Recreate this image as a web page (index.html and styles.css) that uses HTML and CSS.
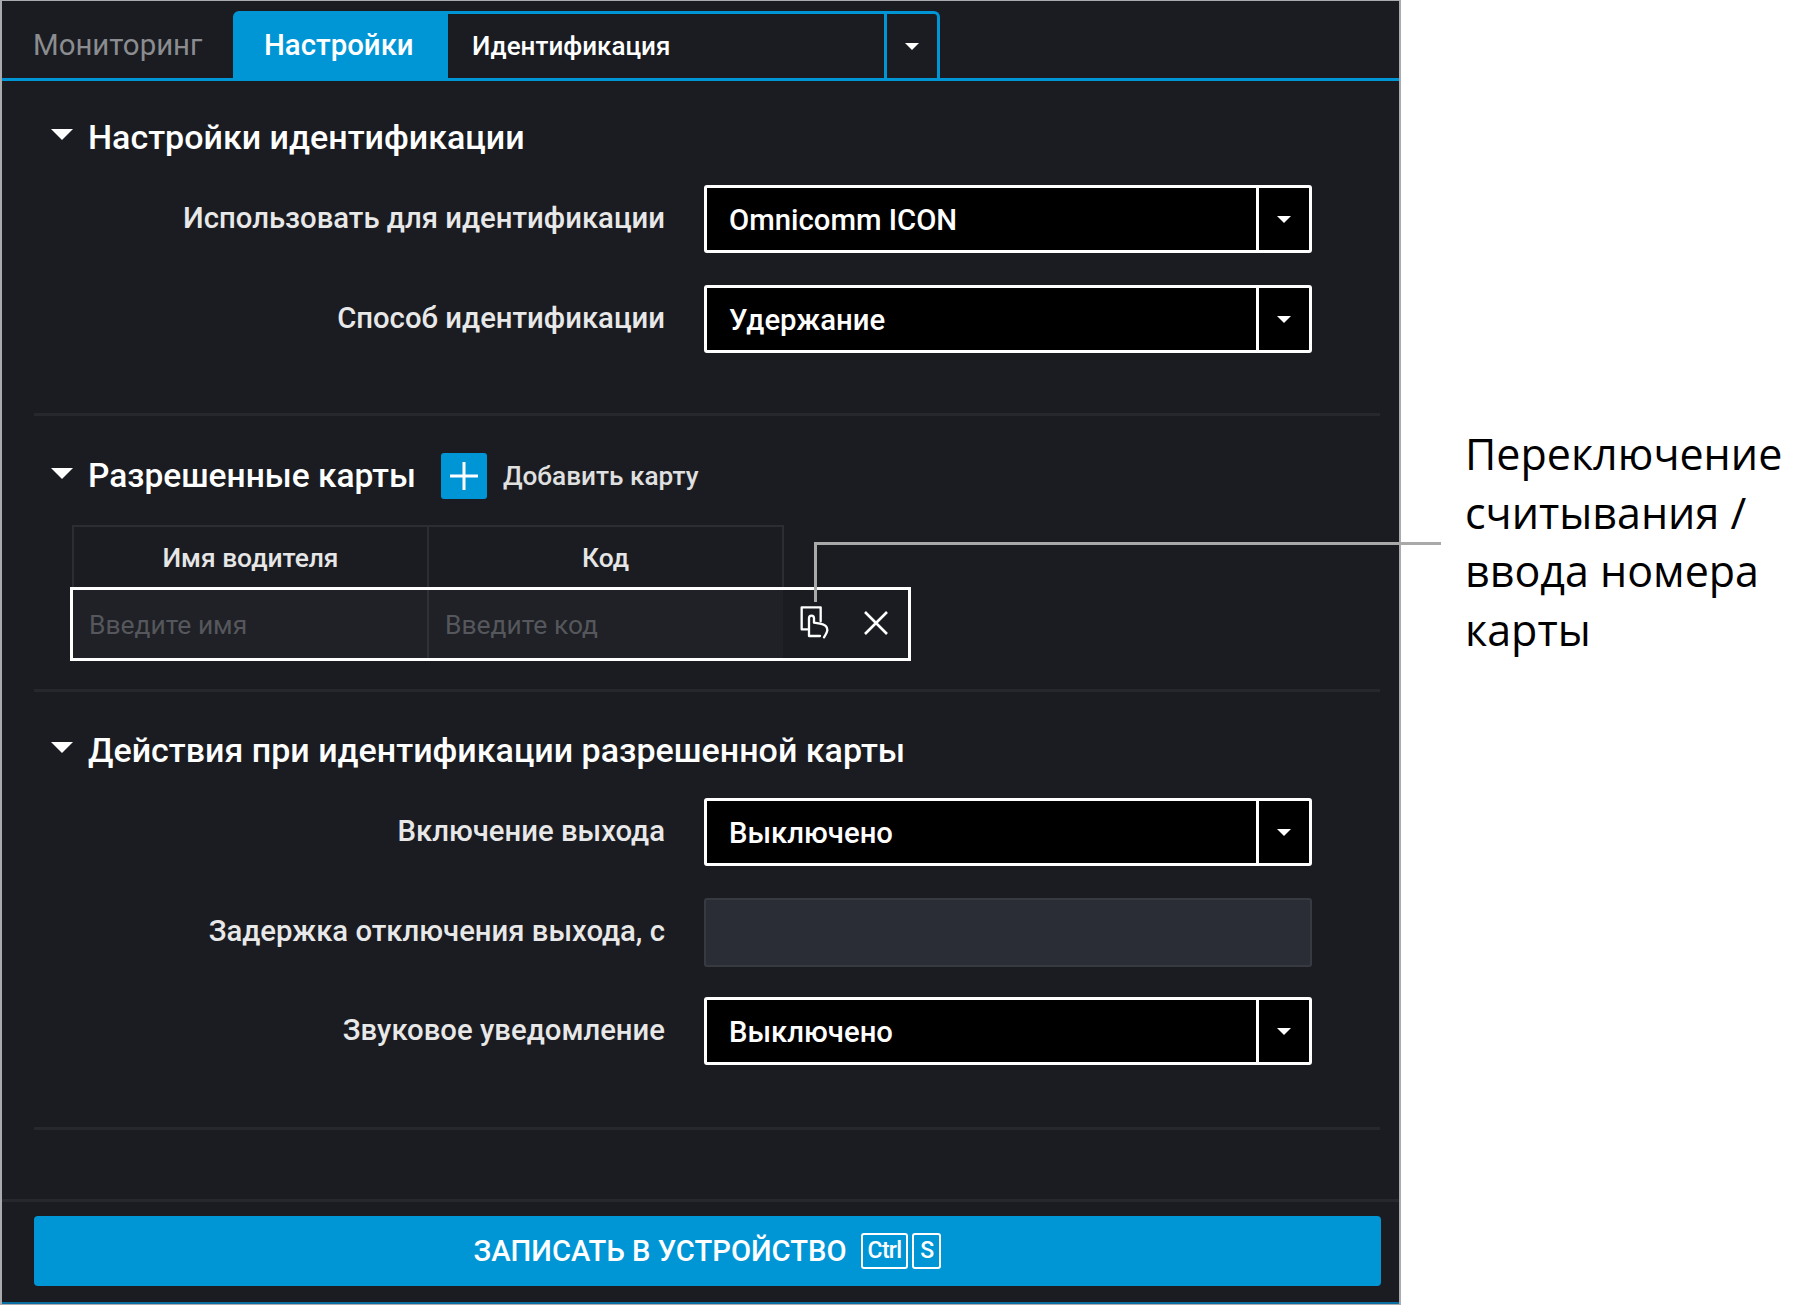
FILE: index.html
```html
<!DOCTYPE html>
<html lang="ru">
<head>
<meta charset="utf-8">
<title>Настройки идентификации</title>
<link rel="stylesheet" href="styles.css">
</head>
<body>
<div class="page">
  <main class="panel">
    <nav class="tabs">
      <div class="tab">Мониторинг</div>
      <div class="tab tab-active">Настройки</div>
      <div class="tab-select">
        <span class="tab-select-value">Идентификация</span>
        <span class="tab-select-arrow"><i class="caret caret-small"></i></span>
      </div>
    </nav>
    <div class="content">
      <section class="section section-ident">
        <h2 class="heading"><i class="caret caret-head"></i>Настройки идентификации</h2>
        <div class="field">
          <label class="field-label">Использовать для идентификации</label>
          <div class="select"><span class="select-value">Omnicomm ICON</span><span class="select-arrow"><i class="caret caret-small"></i></span></div>
        </div>
        <div class="field">
          <label class="field-label">Способ идентификации</label>
          <div class="select"><span class="select-value">Удержание</span><span class="select-arrow"><i class="caret caret-small"></i></span></div>
        </div>
      </section>
      <section class="section section-cards">
        <div class="heading-row">
          <h2 class="heading heading-cards"><i class="caret caret-head"></i>Разрешенные карты</h2>
          <span class="add-btn"><svg class="add-icon" viewBox="0 0 30 30"><path d="M15 1v28M1 15h28" fill="none" stroke="#fff" stroke-width="3"/></svg></span>
          <span class="add-label">Добавить карту</span>
        </div>
        <div class="table-head">
          <div class="th">Имя водителя</div>
          <div class="th">Код</div>
        </div>
        <div class="table-row">
          <div class="td td-name">Введите имя</div>
          <div class="td td-code">Введите код</div>
          <div class="row-actions">
            <svg class="hand-icon" viewBox="0 0 90 105" fill="none" stroke="#fff" stroke-width="7" stroke-linejoin="round" stroke-linecap="round"><path d="M25 73H8V7h57v42"/><path d="M30 93V40c0-11 15-11 15 0v13l18 3c12 2 22 9 22 19 0 6-5 14-10 22M30 93h33"/></svg>
            <svg class="close-icon" viewBox="0 0 26 26"><path d="M2 2l22 22M24 2L2 24" fill="none" stroke="#fff" stroke-width="2.6"/></svg>
          </div>
        </div>
      </section>
      <section class="section section-actions">
        <h2 class="heading"><i class="caret caret-head"></i>Действия при идентификации разрешенной карты</h2>
        <div class="field">
          <label class="field-label">Включение выхода</label>
          <div class="select"><span class="select-value">Выключено</span><span class="select-arrow"><i class="caret caret-small"></i></span></div>
        </div>
        <div class="field field-tight">
          <label class="field-label">Задержка отключения выхода, с</label>
          <div class="input-disabled"></div>
        </div>
        <div class="field">
          <label class="field-label">Звуковое уведомление</label>
          <div class="select"><span class="select-value">Выключено</span><span class="select-arrow"><i class="caret caret-small"></i></span></div>
        </div>
      </section>
    </div>
    <footer class="footer">
      <div class="write-btn">ЗАПИСАТЬ В УСТРОЙСТВО <span class="keys"><kbd class="key">Ctrl</kbd><kbd class="key">S</kbd></span></div>
    </footer>
  </main>
  <div class="callout-line-v"></div>
  <div class="callout-line-h"></div>
  <aside class="note">Переключение считывания / ввода номера карты</aside>
</div>
</body>
</html>
```
FILE: styles.css
```css
* { box-sizing: border-box; }
html, body { margin: 0; height: 100%; background: #fff; }
body { font-family: Roboto, "Noto Sans", sans-serif; overflow: hidden; }
.page { position: relative; display: flex; width: 1818px; height: 1305px; padding: 1px 0 0 2px; }

.panel { width: 1397px; height: 1303px; background: #1a1c22; display: flex; flex-direction: column; color: #fff; border-bottom: 2px solid #0b6ea3; outline: 2px solid #a9abae; }

.tabs { height: 80px; flex: none; display: flex; align-items: flex-end; border-bottom: 3px solid #0096d6; }
.tab { width: 231px; height: 67px; padding-left: 31px; font-size: 29.4px; line-height: 68px; color: #8b8c8f; }
.tab-active { width: 215px; height: 67px; padding-left: 31px; font-weight: 500; font-size: 29.4px; line-height: 69px; background: #0096d6; color: #fff; border-radius: 6px 0 0 0; }
.tab-select { width: 492px; height: 67px; display: flex; border: solid #0096d6; border-width: 3px 3px 0 0; border-radius: 0 6px 0 0; }
.tab-select-value { flex: 1; padding-left: 24px; font-size: 26px; font-weight: 500; line-height: 64px; }
.tab-select-arrow { width: 53px; border-left: 3px solid #0096d6; display: flex; align-items: center; justify-content: center; }

.caret { display: block; width: 0; height: 0; border-style: solid; border-color: #fff transparent transparent; }
.caret-small { border-width: 7px 7px 0; }
.caret-head { border-width: 11px 11px 0; margin: 0 15px 6px -1px; }

.content { flex: 1; padding: 0 19px 0 32px; }
.section { border-bottom: 3px solid #26282d; }
.section-ident { height: 335px; padding-top: 33px; }
.section-cards { height: 276px; padding-top: 37px; }
.section-actions { height: 438px; padding-top: 35px; }

.heading { margin: 0 0 0 18px; display: flex; align-items: center; height: 46px; font-size: 34px; font-weight: 500; line-height: 46px; letter-spacing: 0; }
.heading-cards { font-size: 33.5px; }
.section-ident .heading { margin-bottom: 25px; }
.section-actions .heading { margin-bottom: 25px; }

.field { display: flex; align-items: center; height: 68px; margin-bottom: 32px; }
.field-tight { margin-bottom: 31px; }
.field-label { width: 631px; text-align: right; font-size: 29.3px; font-weight: 500; color: #e8e8e8; margin-right: 39px; padding-bottom: 2px; }

.select { width: 608px; height: 68px; display: flex; background: #000; border: 3px solid #fff; border-radius: 3px; }
.select-value { flex: 1; padding-left: 22px; font-size: 29.3px; font-weight: 500; line-height: 64px; }
.select-arrow { width: 53px; border-left: 3px solid #fff; display: flex; align-items: center; justify-content: center; }
.input-disabled { width: 608px; height: 69px; background: #2a2d36; border: 2px solid #383a42; border-radius: 3px; }

.heading-row { display: flex; align-items: center; height: 46px; }
.add-btn { width: 46px; height: 46px; margin-left: 25px; background: #0096d6; border-radius: 3px; display: flex; align-items: center; justify-content: center; }
.add-icon { width: 30px; height: 30px; }
.add-label { margin-left: 16px; font-size: 26.2px; font-weight: 500; color: #e0e0e0; }

.table-head { display: flex; width: 712px; height: 62px; margin: 26px 0 0 38px; border: solid #2b2d33; border-width: 2px 2px 0; }
.th { flex: 1; text-align: center; font-size: 26.4px; font-weight: 500; color: #e6e6e6; line-height: 62px; }
.th + .th { border-left: 2px solid #2b2d33; }
.table-row { display: flex; width: 841px; height: 74px; margin-left: 36px; border: 3px solid #fff; }
.td { background: #1f2126; font-size: 26.4px; color: #55575c; line-height: 70px; }
.td-name { width: 354px; padding-left: 16px; }
.td-code { width: 356px; padding-left: 16px; border-left: 2px solid #2f3136; }
.row-actions { flex: 1; display: flex; align-items: center; padding: 0 0 3px 16px; gap: 34px; }
.hand-icon { width: 30px; height: 35px; }
.close-icon { width: 26px; height: 26px; }

.footer { height: 103px; flex: none; border-top: 3px solid #26282d; padding: 14px 18px 0 32px; }
.write-btn { height: 70px; background: #0096d6; border-radius: 4px; display: flex; align-items: center; justify-content: center; gap: 14px; font-size: 29.2px; font-weight: 500; color: #fff; }
.keys { display: flex; gap: 4px; }
.key { display: block; font-family: Roboto, sans-serif; font-size: 23px; letter-spacing: -0.7px; font-weight: 500; height: 36px; line-height: 32px; padding: 0 5px; min-width: 29px; text-align: center; border: 2px solid #fff; border-radius: 3px; }

.callout-line-v { position: absolute; left: 814px; top: 542px; width: 3px; height: 60px; background: #a9a9a9; }
.callout-line-h { position: absolute; left: 814px; top: 542px; width: 627px; height: 3px; background: #a9a9a9; }

.note { position: absolute; left: 1465px; top: 425px; width: 340px; font-family: "Open Sans", sans-serif; font-size: 43px; line-height: 58.6px; color: #000; }
```
